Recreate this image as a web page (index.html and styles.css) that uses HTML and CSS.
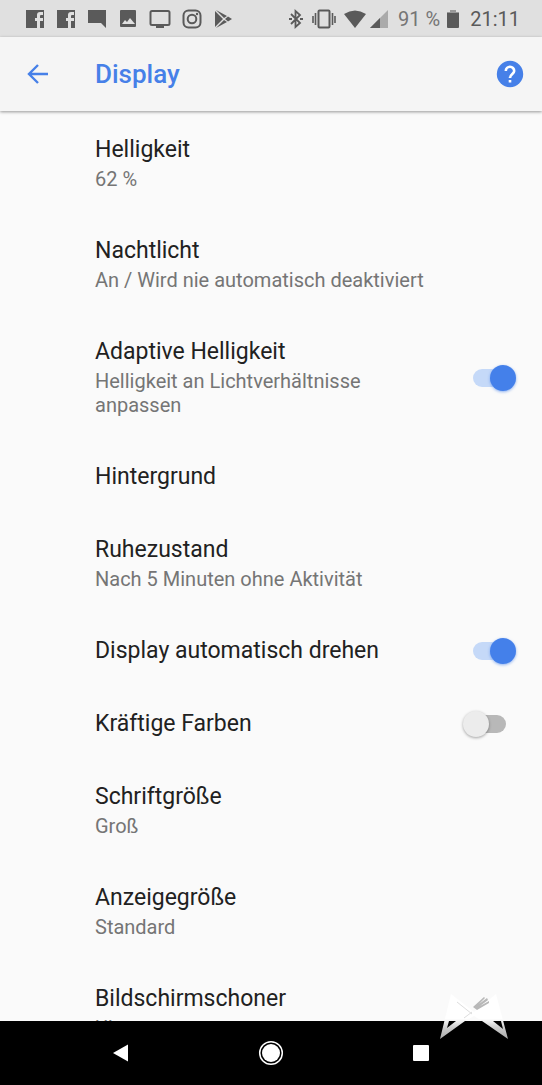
FILE: index.html
```html
<!DOCTYPE html>
<html lang="de">
<head>
<meta charset="utf-8">
<meta name="viewport" content="width=device-width, initial-scale=1">
<title>Display</title>
<link rel="stylesheet" href="styles.css">
</head>
<body>
<div class="screen">
  <div class="status">
    <div class="notifications">
      <svg width="20" height="20" viewBox="0 0 20 20"><path fill="currentColor" d="M1 1h18v18h-4v-7h3V9h-3V7q0-1 1-1h2V3h-3q-3 0-3 3v3h-2v3h2v7H1z"/></svg>
      <svg width="20" height="20" viewBox="0 0 20 20"><path fill="currentColor" d="M1 1h18v18h-4v-7h3V9h-3V7q0-1 1-1h2V3h-3q-3 0-3 3v3h-2v3h2v7H1z"/></svg>
      <svg width="20" height="20" viewBox="0 0 20 20"><path fill="currentColor" d="M1 1h18v18l-5-5H1z"/></svg>
      <svg width="20" height="20" viewBox="0 0 20 20"><path fill="currentColor" fill-rule="evenodd" d="M3 1h14q1 0 1 1v15q0 1-1 1H3q-1 0-1-1V2q0-1 1-1zM4 15h13l-5-6-3 4-2-2z"/></svg>
      <svg width="22" height="20" viewBox="0 0 22 20"><rect x="1.500" y="2" width="19" height="14" rx="1.500" fill="none" stroke="currentColor" stroke-width="2"/><path fill="currentColor" d="M7 16h8v3H7z"/></svg>
      <svg width="20" height="20" viewBox="0 0 20 20"><g fill="none" stroke="currentColor" stroke-width="2"><rect x="1.500" y="1.500" width="17" height="17" rx="5"/><circle cx="10" cy="10" r="4.300"/></g><circle cx="15" cy="5" r="1.200" fill="currentColor"/></svg>
      <svg width="20" height="20" viewBox="0 0 20 20"><path fill="currentColor" d="M2 2v16l8-8zM3 1l8 8 3-2zM3 19l8-8 3 2zM12 10l3-2.500 4 2.500-4 2.500z"/></svg>
    </div>
    <div class="system">
      <svg width="16" height="20" viewBox="0 0 16 20"><path fill="none" stroke="currentColor" stroke-width="1.800" d="M3 5l9 9-4.500 4V2L12 6l-9 9"/><path fill="currentColor" d="M1 9h3v2H1zM12 9h3v2h-3z"/></svg>
      <svg width="32" height="20" viewBox="-3 0 32 20"><rect x="7.500" y="1.500" width="11" height="17" rx="1" fill="none" stroke="currentColor" stroke-width="2"/><path stroke="currentColor" stroke-width="1.600" d="M4.500 4v12M2 7v7M21.500 4v12M24 7v7"/></svg>
      <svg width="22" height="20" viewBox="1 0 22 20"><path fill="currentColor" d="M1 5Q12-2 23 5L12 19z"/></svg>
      <svg width="18" height="20" viewBox="1 0 18 20"><path fill="#aaa" d="M19 1v18H1z"/><path fill="currentColor" d="M11 9v10H1z"/></svg>
      <span class="percent">91 %</span>
      <svg width="14" height="20" viewBox="0 0 14 20"><path fill="#999" d="M4 1h6v2h3v2H1V3h3z"/><path fill="currentColor" d="M1 4h12v14q0 1-1 1H2q-1 0-1-1z"/></svg>
      <span class="clock">21:11</span>
    </div>
  </div>

  <header class="toolbar">
    <button class="icon-button" aria-label="Zurück"><svg width="24" height="24" viewBox="0 0 24 24"><path fill="none" stroke="currentColor" stroke-width="2.400" d="M23 12H4M13 3l-9 9 9 9"/></svg></button>
    <h1 class="heading">Display</h1>
    <button class="icon-button" aria-label="Hilfe"><svg width="28" height="28" viewBox="0 0 28 28"><circle cx="14" cy="14" r="13.200" fill="currentColor"/><path fill="none" stroke="#fff" stroke-width="2.600" d="M9.800 11a4.200 4.200 0 1 1 8.400 0c0 3-4.200 3-4.200 7"/><path fill="#fff" d="M12.700 20h2.600v2.600h-2.600z"/></svg></button>
  </header>

  <main class="list">
    <button class="row"><span class="text"><span class="title">Helligkeit</span><span class="summary">62 %</span></span></button>
    <button class="row"><span class="text"><span class="title">Nachtlicht</span><span class="summary">An / Wird nie automatisch deaktiviert</span></span></button>
    <label class="row"><span class="text"><span class="title">Adaptive Helligkeit</span><span class="summary">Helligkeit an Lichtverhältnisse anpassen</span></span><input class="switch" type="checkbox" role="switch" checked></label>
    <button class="row"><span class="text"><span class="title">Hintergrund</span></span></button>
    <button class="row"><span class="text"><span class="title">Ruhezustand</span><span class="summary">Nach 5 Minuten ohne Aktivität</span></span></button>
    <label class="row"><span class="text"><span class="title">Display automatisch drehen</span></span><input class="switch" type="checkbox" role="switch" checked></label>
    <label class="row"><span class="text"><span class="title">Kräftige Farben</span></span><input class="switch" type="checkbox" role="switch"></label>
    <button class="row"><span class="text"><span class="title">Schriftgröße</span><span class="summary">Groß</span></span></button>
    <button class="row"><span class="text"><span class="title">Anzeigegröße</span><span class="summary">Standard</span></span></button>
    <button class="row"><span class="text"><span class="title">Bildschirmschoner</span><span class="summary">Uhr</span></span></button>
  </main>

  <nav class="navbar">
    <button class="nav-button" aria-label="Zurück"><svg width="26" height="26" viewBox="0 0 26 26"><path fill="#fff" d="M5 13L20 4.500v17z"/></svg></button>
    <button class="nav-button" aria-label="Startseite"><svg width="26" height="26" viewBox="0 0 26 26"><circle cx="13" cy="13" r="11.300" fill="none" stroke="#fff" stroke-width="1.500"/><circle cx="13" cy="13" r="9" fill="#fff"/></svg></button>
    <button class="nav-button" aria-label="Übersicht"><svg width="26" height="26" viewBox="0 0 26 26"><rect x="5" y="5" width="16" height="16" rx="1" fill="#fff"/></svg></button>
    <svg class="watermark" width="70" height="48" viewBox="0 0 70 48" aria-hidden="true">
      <defs><linearGradient id="fade" x1="0" y1="0" x2="0" y2="1"><stop offset=".55" stop-color="#fff"/><stop offset=".75" stop-color="#ccc"/><stop offset="1" stop-color="#aaa"/></linearGradient></defs>
      <path fill="url(#fade)" fill-rule="evenodd" d="M1 47L12 2l23 18L57 2l12 45-26-18-8-5-9 5zM10 29l-2 7 9-7zM54 29l10 8-2-8z"/>
      <path fill="#b8b8b8" d="M34 15L45 5l1 1-6 6 8-6 1 2-8 6 9-5v2L38 18z"/>
      <path fill="none" stroke="#ddd" d="M18 10l15 12M33 20l-8 6"/>
    </svg>
  </nav>
</div>
</body>
</html>
```
FILE: styles.css
```css
* { box-sizing: border-box; }

body {
  margin: 0;
  font-family: Roboto, "Noto Sans", sans-serif;
  color: #212121;
  background: #fafafa;
}

button {
  margin: 0;
  border: 0;
  padding: 0;
  background: none;
  font: inherit;
  color: inherit;
  text-align: left;
}

svg { display: block; flex: none; }

.screen {
  display: flex;
  flex-direction: column;
  height: 100vh;
}

.status {
  display: flex;
  justify-content: space-between;
  align-items: center;
  flex: none;
  height: 37px;
  padding: 0 22px 0 25px;
  background: #e0e0e0;
  color: #5a5a5a;
}

.notifications { display: flex; gap: 11px; }

.system {
  display: flex;
  align-items: center;
  gap: 6px;
  font-size: 20px;
  line-height: 24px;
}

.system svg + svg { margin-left: -2px; }
.percent { margin-left: 4px; color: #757575; }
.clock { margin-left: 4px; }

.toolbar {
  display: flex;
  align-items: center;
  flex: none;
  height: 74px;
  padding: 0 18px 0 25px;
  background: #f5f5f5;
  color: #4680e8;
  box-shadow: 0 1px 3px rgba(0, 0, 0, .4);
  z-index: 1;
}

.icon-button { flex: none; }

.heading {
  flex: 1;
  margin: 0 0 0 46px;
  font-size: 26px;
  line-height: 32px;
  font-weight: 500;
}

.list {
  flex: 1;
  min-height: 0;
  padding-top: 2px;
  overflow-y: auto;
  scrollbar-width: none;
}

.row {
  display: flex;
  align-items: center;
  gap: 48px;
  width: 100%;
  padding: 23px 26px 23px 95px;
}

.text {
  display: flex;
  flex: 1;
  flex-direction: column;
  gap: 4px;
}

.title { font-size: 23px; line-height: 27px; }
.summary { font-size: 20px; line-height: 24px; color: #757575; }

.switch {
  appearance: none;
  position: relative;
  display: flex;
  align-items: center;
  flex: none;
  width: 53px;
  height: 26px;
  margin: 0;
}

.switch::before {
  content: "";
  flex: 1;
  height: 18px;
  margin: 0 10px;
  border-radius: 9px;
  background: #b8b8b8;
}

.switch::after {
  content: "";
  position: absolute;
  left: 0;
  top: 0;
  width: 26px;
  height: 26px;
  border-radius: 50%;
  background: #ececec;
  box-shadow: 0 1px 3px rgba(0, 0, 0, .35);
}

.switch:checked::before { background: #c5d9f8; }

.switch:checked::after {
  left: auto;
  right: 0;
  background: #4480ea;
  box-shadow: 0 1px 3px rgba(68, 128, 234, .6);
}

.navbar {
  position: relative;
  display: flex;
  justify-content: center;
  align-items: center;
  gap: 124px;
  flex: none;
  height: 64px;
  background: #000;
}

.watermark {
  position: absolute;
  right: 33px;
  bottom: 45px;
}
```
